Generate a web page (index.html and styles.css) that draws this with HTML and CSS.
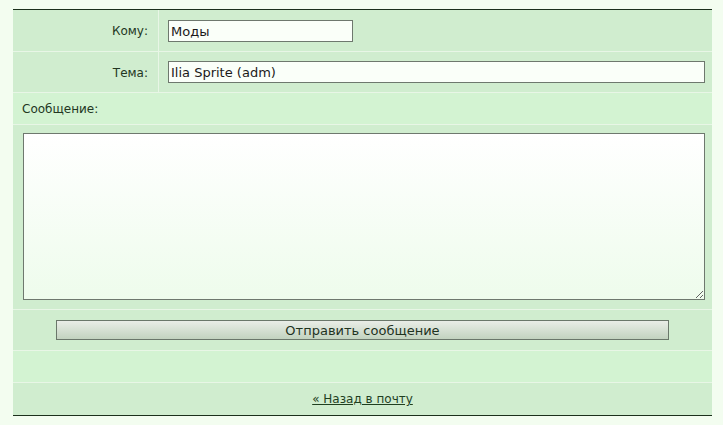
FILE: index.html
```html
<!DOCTYPE html>
<html lang="ru">
<head>
<meta charset="utf-8">
<title>Новое сообщение</title>
<link rel="stylesheet" href="styles.css">
</head>
<body>
<form class="mail-form">
  <div class="row row-field">
    <label class="label" for="to">Кому:</label>
    <div class="value"><input id="to" class="input input-short" type="text" value="Моды"></div>
  </div>
  <div class="row row-field row-subject">
    <label class="label" for="subject">Тема:</label>
    <div class="value"><input id="subject" class="input input-long" type="text" value="Ilia Sprite (adm)"></div>
  </div>
  <div class="row row-caption row-alt">
    <label class="caption" for="body">Сообщение:</label>
  </div>
  <div class="row row-text">
    <textarea id="body" class="textarea"></textarea>
  </div>
  <div class="row row-submit">
    <button type="button" class="button">Отправить сообщение</button>
  </div>
  <div class="row row-empty row-alt"></div>
  <div class="row row-back">
    <a class="back-link" href="#">« Назад в почту</a>
  </div>
</form>
</body>
</html>
```
FILE: styles.css
```css
html, body {
  margin: 0;
  padding: 0;
  background: #f3fdf0;
}

body {
  padding: 9px 11px 10px 13px;
  font-family: "DejaVu Sans", Verdana, sans-serif;
  font-size: 12px;
  color: #223622;
}

.mail-form {
  width: 699px;
  display: grid;
  row-gap: 1px;
  background: #e8f6e6;
  border-top: 1px solid #1c301c;
  border-bottom: 1px solid #1c301c;
}

.row {
  background: #d0edcf;
}

.row-alt {
  background: #d3f3d2;
}

.row-field {
  display: grid;
  grid-template-columns: 145px 553px;
  column-gap: 1px;
  background: #e8f6e6;
}

.row-field > .label,
.row-field > .value {
  background: #d0edcf;
}

.label {
  display: flex;
  align-items: center;
  justify-content: flex-end;
  padding-right: 10px;
  padding-top: 1px;
}

.value {
  padding: 10px 0 9px 9px;
}

.row-subject .value {
  padding: 9px 0 9px 9px;
}

.input {
  display: block;
  box-sizing: border-box;
  height: 22px;
  margin: 0;
  padding: 0 0 0 2px;
  border: 1px solid #6e786e;
  background: #fafff9;
  font-family: "DejaVu Sans", Verdana, sans-serif;
  font-size: 13px;
  color: #1a1a1a;
  outline: none;
}

.input-short {
  width: 185px;
}

.input-long {
  width: 537px;
}

.row-caption {
  height: 31px;
  display: flex;
  align-items: center;
  padding-left: 9px;
}

.row-text {
  padding: 8px 7px 9px 10px;
}

.textarea {
  display: block;
  box-sizing: border-box;
  width: 682px;
  height: 167px;
  margin: 0;
  border: 1px solid #6e786e;
  background: linear-gradient(#ffffff, #eefcec);
  font-family: "DejaVu Sans", Verdana, sans-serif;
  font-size: 12px;
  outline: none;
}

.row-submit {
  height: 40px;
  display: flex;
  align-items: center;
  justify-content: center;
}

.button {
  width: 613px;
  height: 20px;
  margin: 0;
  padding: 0;
  border: 1px solid #6a776a;
  background: linear-gradient(#e9ede7, #c2d3bf);
  font-family: "DejaVu Sans", Verdana, sans-serif;
  font-size: 13px;
  color: #1f331f;
}

.row-empty {
  height: 31px;
}

.row-back {
  height: 32px;
  display: flex;
  align-items: center;
  justify-content: center;
}

.back-link {
  color: #1f3f1f;
  text-decoration: underline;
}
```
